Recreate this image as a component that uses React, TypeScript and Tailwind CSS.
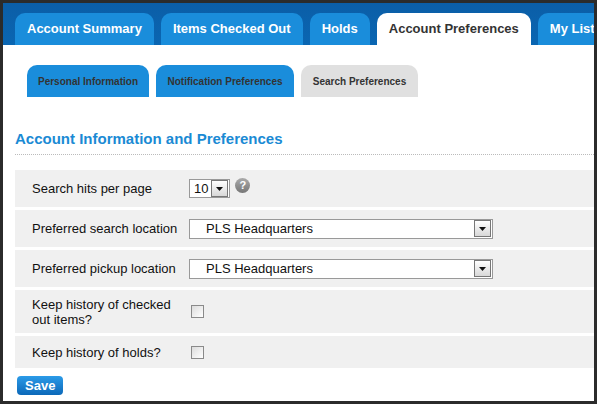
const Arrow = () => (
  <span className="flex items-center justify-center w-[17px] h-[17px] border border-[#777] bg-gradient-to-b from-white to-[#d8d8d8]">
    <svg width="7" height="4" viewBox="0 0 7 4"><path d="M0 0h7L3.5 4z" fill="#111" /></svg>
  </span>
);

const Checkbox = () => (
  <span className="block w-[13px] h-[13px] border border-[#8a8a8a] bg-gradient-to-br from-[#dcdcdc] to-white" />
);

const Row = ({ label, h, children }: { label: React.ReactNode; h: string; children: React.ReactNode }) => (
  <div className={`flex items-center bg-[#f0f0f0] ${h}`}>
    <div className="w-[174px] shrink-0 pl-[17px] leading-[15px]">{label}</div>
    <div className="flex items-center">{children}</div>
  </div>
);

export default function App() {
  const tabs = ['Account Summary', 'Items Checked Out', 'Holds', 'Account Preferences', 'My Lists'];
  return (
    <div className="w-[597px] h-[404px] bg-[#2b2b2b] p-[3px]" style={{ fontFamily: '"Liberation Sans", Arial, sans-serif' }}>
      <div className="w-full h-full bg-white flex flex-col overflow-hidden">
        <div className="h-[42px] shrink-0 bg-gradient-to-b from-[#0b5ea7] to-[#0a66b2] flex items-end gap-[7px] pl-[12px]">
          {tabs.map((t) => {
            const active = t === 'Account Preferences';
            return (
              <div
                key={t}
                className={`h-[32px] shrink-0 whitespace-nowrap px-[12px] rounded-t-[10px] flex items-center text-[13px] font-bold ${active ? 'bg-white text-[#333]' : 'bg-[#1a8ddb] text-white'}`}
              >
                {t}
              </div>
            );
          })}
        </div>
        <div className="flex gap-[7px] pl-[24px] mt-[20px]">
          <div className="h-[32px] w-[122px] whitespace-nowrap rounded-t-[10px] bg-[#1a8ddb] text-[#333] text-[10px] font-bold flex items-center justify-center">Personal Information</div>
          <div className="h-[32px] w-[138px] whitespace-nowrap rounded-t-[10px] bg-[#1a8ddb] text-[#333] text-[10px] font-bold flex items-center justify-center">Notification Preferences</div>
          <div className="h-[32px] w-[117px] whitespace-nowrap rounded-t-[10px] bg-[#e0e0e0] text-[#333] text-[10px] font-bold flex items-center justify-center">Search Preferences</div>
        </div>
        <div className="mx-[12px] mt-[33px] text-[15px] font-bold text-[#1a8ad4] leading-[18px]">Account Information and Preferences</div>
        <div className="ml-[12px] mt-[6px] border-b border-dotted border-[#bbb]" />
        <div className="ml-[12px] mt-[15px] flex flex-col gap-[3px] text-[13px] text-[#111]">
          <Row label="Search hits per page" h="h-[37px]">
            <div className="flex items-center h-[19px] border border-[#999] bg-white pl-[4px] pr-px gap-[3px]">
              <span>10</span>
              <Arrow />
            </div>
            <span className="ml-[5px] -mt-[6px] w-[15px] h-[15px] rounded-full bg-gradient-to-b from-[#aaa] to-[#777] text-white text-[11px] font-bold flex items-center justify-center">?</span>
          </Row>
          <Row label="Preferred search location" h="h-[37px]">
            <div className="flex items-center justify-between w-[304px] h-[20px] border border-[#999] bg-white pl-[16px] pr-px">
              <span>PLS Headquarters</span>
              <Arrow />
            </div>
          </Row>
          <Row label="Preferred pickup location" h="h-[37px]">
            <div className="flex items-center justify-between w-[304px] h-[20px] border border-[#999] bg-white pl-[16px] pr-px">
              <span>PLS Headquarters</span>
              <Arrow />
            </div>
          </Row>
          <Row label={<>Keep history of checked<br />out items?</>} h="h-[43px]">
            <span className="ml-[2px]"><Checkbox /></span>
          </Row>
          <Row label="Keep history of holds?" h="h-[32px]">
            <span className="ml-[2px]"><Checkbox /></span>
          </Row>
        </div>
        <div className="ml-[14px] mt-[5px]">
          <button className="h-[19px] px-[8px] rounded-[4px] bg-gradient-to-b from-[#2b9be8] to-[#0b68b8] text-white text-[13px] font-bold leading-none">Save</button>
        </div>
      </div>
    </div>
  );
}
